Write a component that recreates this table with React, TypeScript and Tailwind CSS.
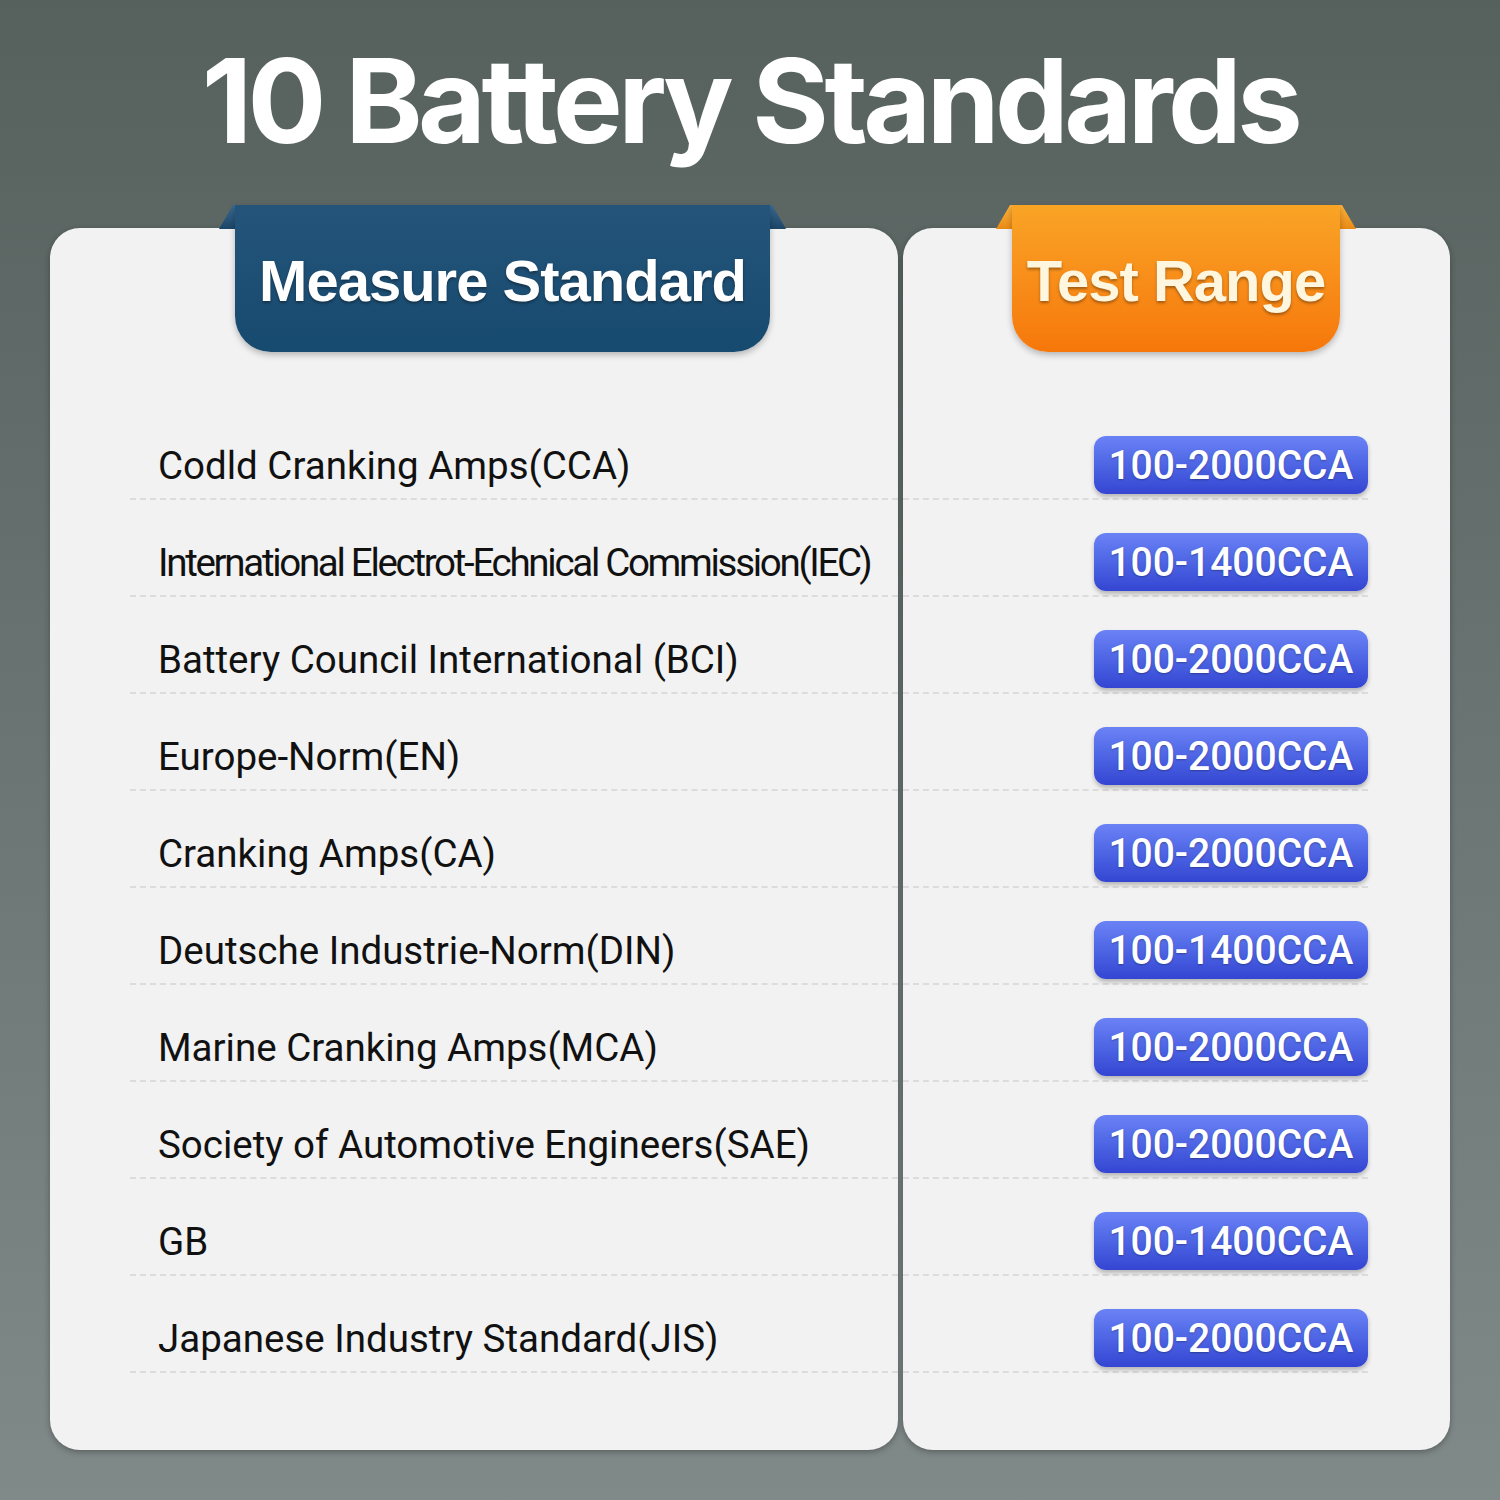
import React from "react";

const rows: { name: string; range: string; tight?: boolean }[] = [
    { name: "Codld Cranking Amps(CCA)", range: "100-2000CCA" },
    { name: "International Electrot-Echnical Commission(IEC)", range: "100-1400CCA", tight: true },
    { name: "Battery Council International (BCI)", range: "100-2000CCA" },
    { name: "Europe-Norm(EN)", range: "100-2000CCA" },
    { name: "Cranking Amps(CA)", range: "100-2000CCA" },
    { name: "Deutsche Industrie-Norm(DIN)", range: "100-1400CCA" },
    { name: "Marine Cranking Amps(MCA)", range: "100-2000CCA" },
    { name: "Society of Automotive Engineers(SAE)", range: "100-2000CCA" },
    { name: "GB", range: "100-1400CCA" },
    { name: "Japanese Industry Standard(JIS)", range: "100-2000CCA" },
];

const Tab = ({ label, variant }: { label: string; variant: "blue" | "orange" }) => {
    const blue = variant === "blue";
    return (
        <div className="relative -mt-[23px] w-fit">
            {/* folded flap above the card edge */}
            <div
                className={`absolute -left-[16px] -right-[16px] top-0 h-[24px] [clip-path:polygon(14px_0,calc(100%-14px)_0,100%_100%,0_100%)] ${
                    blue ? "bg-gradient-to-b from-[#3a6a90] to-[#1c4668]" : "bg-gradient-to-b from-[#fbb23a] to-[#e98a12]"
                }`}
            />
            <div
                className={`relative flex h-[147px] items-center justify-center rounded-b-[36px] shadow-[0_3px_6px_rgba(0,0,0,0.25)] ${
                    blue
                        ? "w-[535px] bg-gradient-to-b from-[#245479] to-[#174a6f] text-white"
                        : "w-[328px] bg-gradient-to-b from-[#f9a425] to-[#f6770a] text-[#fff6df]"
                }`}
            >
                <span className="pt-[4px] text-[58px] font-bold tracking-[-1px] [font-family:'Liberation_Sans',Arial,sans-serif] [text-shadow:0_2px_3px_rgba(0,0,0,0.35)]">
                    {label}
                </span>
            </div>
        </div>
    );
};

export default function App() {
    return (
        <div className="flex h-[1500px] w-[1500px] flex-col bg-gradient-to-b from-[#56615e] to-[#808a89] [font-family:Roboto,sans-serif]">
            <div className="flex h-[205px] items-start justify-center pt-[36px]">
                <h1 className="text-[117px] leading-[130px] font-bold tracking-[-4.5px] text-white [font-family:Inter,sans-serif]">
                    10 Battery Standards
                </h1>
            </div>

            <div className="flex gap-[5px] px-[50px] pt-[23px]">
                {/* Left card */}
                <div className="flex h-[1222px] w-[848px] flex-col rounded-[30px] bg-[#f2f2f2] shadow-[0_2px_6px_rgba(0,0,0,0.3)]">
                    <div className="ml-[185px]">
                        <Tab label="Measure Standard" variant="blue" />
                    </div>
                    <div className="mt-[51px] ml-[80px] flex flex-col">
                        {rows.map((r) => (
                            <div
                                key={r.name}
                                className="flex h-[97px] items-end border-b-2 border-dashed border-[#dcdcdc] pb-[7px] pl-[28px]"
                            >
                                <span
                                    className={`text-[38.5px] leading-[50px] text-[#111] ${
                                        r.tight ? "tracking-[-2.3px]" : ""
                                    }`}
                                >
                                    {r.name}
                                </span>
                            </div>
                        ))}
                    </div>
                </div>

                {/* Right card */}
                <div className="flex h-[1222px] w-[547px] flex-col rounded-[30px] bg-[#f2f2f2] shadow-[0_2px_6px_rgba(0,0,0,0.3)]">
                    <div className="ml-[109px]">
                        <Tab label="Test Range" variant="orange" />
                    </div>
                    <div className="mt-[51px] mr-[82px] flex flex-col">
                        {rows.map((r, i) => (
                            <div
                                key={i}
                                className="flex h-[97px] items-end justify-end border-b-2 border-dashed border-[#dcdcdc] pb-[4px]"
                            >
                                <div className="flex h-[58px] w-[274px] items-center justify-center rounded-[12px] bg-gradient-to-b from-[#6b82f6] to-[#3445d2] shadow-[0_3px_4px_rgba(0,0,0,0.25)]">
                                    <span className="inline-block scale-x-[0.95] text-[41px] leading-none font-medium text-white [text-shadow:0_1px_2px_rgba(0,0,0,0.3)]">
                                        {r.range}
                                    </span>
                                </div>
                            </div>
                        ))}
                    </div>
                </div>
            </div>
        </div>
    );
}
